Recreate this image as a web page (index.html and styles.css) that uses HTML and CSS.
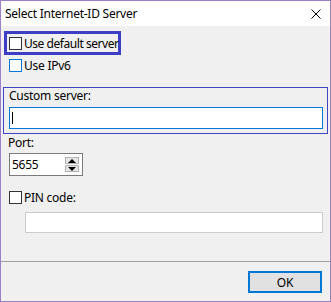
FILE: index.html
```html
<!DOCTYPE html>
<html lang="en">
<head>
    <meta charset="UTF-8">
    <title>Select Internet-ID Server</title>
    <link rel="stylesheet" href="styles.css">
</head>
<body>
    <div class="janela">
        <div class="titulo">
            <span class="titulo-texto">Select Internet-ID Server</span>
            <svg class="fechar" width="10" height="10" viewBox="0 0 10 10">
                <path d="M0.5 0.5 L9.5 9.5 M9.5 0.5 L0.5 9.5" stroke="#000" stroke-width="1" fill="none"/>
            </svg>
        </div>
        <div class="conteudo">
            <div class="destaque">
                <span class="caixa"></span>
                <span class="rotulo">Use default server</span>
            </div>
            <div class="linha-check ipv6">
                <span class="caixa foco"></span>
                <span class="rotulo">Use IPv6</span>
            </div>
            <div class="grupo">
                <div class="rotulo-grupo">Custom server:</div>
                <div class="campo campo-ativo"><span class="cursor"></span></div>
            </div>
            <div class="rotulo-porta">Port:</div>
            <div class="spin">
                <span class="spin-valor">5655</span>
                <div class="spin-botoes">
                    <div class="spin-botao"><span class="seta-cima"></span></div>
                    <div class="spin-botao"><span class="seta-baixo"></span></div>
                </div>
            </div>
            <div class="linha-check pin">
                <span class="caixa"></span>
                <span class="rotulo">PIN code:</span>
            </div>
            <div class="campo campo-pin"></div>
        </div>
        <div class="rodape">
            <button class="botao-ok">OK</button>
        </div>
    </div>
</body>
</html>
```

FILE: styles.css
```css
body {
    margin: 0;
    font-family: "Noto Sans", "Open Sans", sans-serif;
    font-size: 12px;
    letter-spacing: -0.25px;
    color: #000;
}
.janela {
    width: 331px;
    height: 302px;
    box-sizing: border-box;
    border: 1px solid #9b80c8;
    background: #f0f0f0;
    display: flex;
    flex-direction: column;
}
.titulo {
    height: 25px;
    background: white;
    display: flex;
    align-items: center;
    justify-content: space-between;
    padding: 0 9px 0 4px;
}
.titulo-texto {
    line-height: 15px;
    white-space: nowrap;
}
.fechar {
    display: block;
}
.conteudo {
    height: 235px;
    display: flex;
    flex-direction: column;
    align-items: flex-start;
}
.caixa {
    width: 13px;
    height: 13px;
    box-sizing: border-box;
    border: 1px solid #333;
    background: white;
    flex: none;
}
.caixa.foco {
    border-color: #0078d7;
}
.rotulo {
    margin-left: 2px;
    line-height: 15px;
    white-space: nowrap;
}
.destaque {
    margin: 5px 0 0 3px;
    width: 117px;
    height: 24px;
    box-sizing: border-box;
    border: 3px solid #3c3fc6;
    padding-left: 2px;
    display: flex;
    align-items: center;
}
.destaque .rotulo {
    letter-spacing: -0.45px;
}
.linha-check {
    height: 13px;
    margin-left: 8px;
    display: flex;
    align-items: center;
}
.ipv6 {
    margin-top: 4px;
}
.grupo {
    margin: 15px 0 0 2px;
    width: 325px;
    box-sizing: border-box;
    border: 1px solid #4045c4;
    padding: 0 4px 4px 5px;
}
.rotulo-grupo {
    line-height: 15px;
}
.campo {
    height: 22px;
    box-sizing: border-box;
    background: white;
    display: flex;
    align-items: center;
}
.campo-ativo {
    margin-top: 4px;
    border: 1px solid #0078d7;
    padding-left: 2px;
}
.cursor {
    width: 1px;
    height: 12px;
    background: #000;
}
.rotulo-porta {
    margin: 1px 0 0 7px;
    line-height: 15px;
}
.spin {
    margin: 3px 0 0 8px;
    width: 74px;
    height: 23px;
    box-sizing: border-box;
    border: 1px solid #7a7a7a;
    background: white;
    display: flex;
    align-items: center;
    justify-content: space-between;
    padding: 0 3px 0 2px;
}
.spin-botoes {
    display: flex;
    flex-direction: column;
    gap: 1px;
}
.spin-botao {
    width: 14px;
    height: 7px;
    box-sizing: border-box;
    border: 1px solid #b4b4b4;
    background: #e6e6e6;
    display: flex;
    align-items: center;
    justify-content: center;
}
.seta-cima {
    border-left: 4px solid transparent;
    border-right: 4px solid transparent;
    border-bottom: 4px solid #000;
}
.seta-baixo {
    border-left: 4px solid transparent;
    border-right: 4px solid transparent;
    border-top: 4px solid #000;
}
.pin {
    margin-top: 15px;
}
.campo-pin {
    margin: 8px 0 0 24px;
    width: 298px;
    height: 21px;
    border: 1px solid #cccccc;
}
.rodape {
    flex: 1;
    border-top: 1px solid #a0a0a0;
    display: flex;
    justify-content: flex-end;
    align-items: flex-start;
    padding: 9px 8px 0 0;
}
.botao-ok {
    width: 74px;
    height: 22px;
    box-sizing: border-box;
    border: 2px solid #0078d7;
    background: #e1e1e1;
    font-family: inherit;
    font-size: 12px;
    letter-spacing: inherit;
    padding: 0;
    color: #000;
}
```
